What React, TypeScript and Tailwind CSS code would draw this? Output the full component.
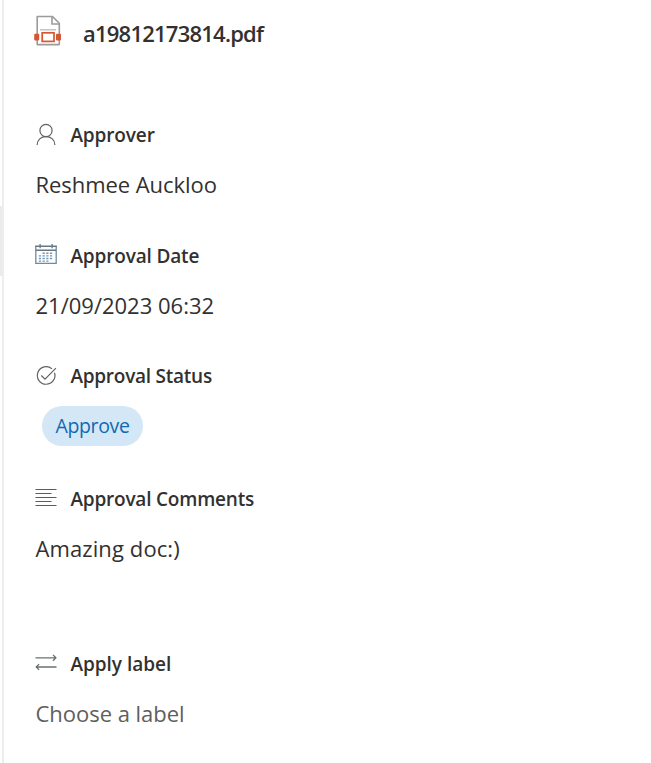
import type { ReactNode } from "react";

function PdfIcon() {
  return (
    <svg width="28" height="32" viewBox="0 0 28 32" fill="none" className="shrink-0">
      <path d="M3.2 1.5H18.5L25.3 8.3V29.6H3.2Z" fill="#fff" stroke="#9b9b9b" strokeWidth="1.6" strokeLinejoin="round" />
      <path d="M18 1.8V9H25" stroke="#9b9b9b" strokeWidth="1.6" />
      <path d="M6 14.8H22" stroke="#b5b5b5" strokeWidth="1.2" />
      <rect x="6" y="16.3" width="16" height="11.7" fill="#fff" />
      <rect x="8.2" y="17.8" width="11.8" height="8.6" stroke="#d65532" strokeWidth="1.7" />
      <rect x="0.2" y="18.8" width="5" height="6.8" rx="1" fill="#d65532" />
      <rect x="22" y="18.8" width="5" height="6.8" rx="1" fill="#d65532" />
    </svg>
  );
}

function PersonIcon() {
  return (
    <svg width="22" height="24" viewBox="0 0 22 24" fill="none" stroke="#5f6265" strokeWidth="1.2" className="shrink-0">
      <circle cx="11" cy="8.5" r="6.1" />
      <path d="M2.1 23C2.1 18 6 14.6 11 14.6S19.9 18 19.9 23" />
    </svg>
  );
}

function CalendarIcon() {
  return (
    <svg width="22" height="24" viewBox="0 0 22 24" fill="none" stroke="#667783" className="shrink-0">
      <path d="M0.8 3V20.3H21.2V3" stroke="#6d8ba3" strokeWidth="1.3" />
      <path d="M0.2 3.2H21.8M0.8 7.3H21.2" strokeWidth="1.5" />
      <path d="M5.1 1V5.3M17.1 1V5.3" strokeWidth="1.3" />
      <path
        d="M7.5 10.3H17.3M3.8 12.9H17.3M3.8 15.5H17.3M3.8 18.1H13.6"
        strokeWidth="1.4"
        strokeDasharray="2.3 1.4"
        stroke="#7196b6"
      />
    </svg>
  );
}

function CheckIcon() {
  return (
    <svg width="22" height="24" viewBox="0 0 22 24" fill="none" stroke="#5f6265" strokeWidth="1.2" className="shrink-0">
      <path d="M17 5.9A8.8 8.8 0 1 0 19.5 9.7" />
      <path d="M6.3 12.5L10 16.2L20.9 5.2" />
    </svg>
  );
}

function LinesIcon() {
  return (
    <svg width="22" height="24" viewBox="0 0 22 24" fill="none" stroke="#5c5c5c" className="shrink-0">
      <path d="M0.5 3.5H21.5M0.5 7.5H16.5M0.5 11.5H21.5M0.5 15.5H16.5M0.5 19.5H21.5" />
    </svg>
  );
}

function SwapIcon() {
  return (
    <svg width="22" height="24" viewBox="0 0 22 24" fill="none" stroke="#6a7070" strokeWidth="1.3" className="shrink-0">
      <path d="M0.5 6.8H21M18 3.9L20.9 6.8L18 9.7" />
      <path d="M21.5 16H1.2M4.1 13.1L1.2 16L4.1 18.9" />
    </svg>
  );
}

function Label({ icon, className, children }: { icon: ReactNode; className: string; children: string }) {
  return (
    <div className="flex h-[30px] items-center gap-[13px]">
      <div className="pb-[2px]">{icon}</div>
      <span className={"pl-[0.4px] text-[19px] font-semibold leading-[30px] whitespace-nowrap " + className}>
        {children}
      </span>
    </div>
  );
}

function Value({ className, children }: { className?: string; children: string }) {
  return (
    <div className={"mt-[19px] h-[30px] pl-[0.5px] text-[22px] leading-[30px] whitespace-nowrap " + (className ?? "")}>
      {children}
    </div>
  );
}

export default function App() {
  return (
    <div className="flex h-[763px] w-[651px] overflow-hidden bg-white font-['Open_Sans','Noto_Sans',sans-serif] text-[#323130]">
      <div className="w-1 shrink-0 border-r-2 border-[#eeeeee]">
        <div className="mt-[206px] h-[70px] bg-[#edebe9]" />
      </div>
      <main className="flex-1 pl-[31px]">
        <header className="-ml-px flex h-[120px] items-start pt-[15px]">
          <PdfIcon />
          <h1 className="mt-[3px] ml-[21px] text-[22px] font-semibold leading-[30px] tracking-[-0.77px]">
            a19812173814.pdf
          </h1>
        </header>
        <section className="h-[121px]">
          <Label icon={<PersonIcon />} className="tracking-[-0.12px]">Approver</Label>
          <Value className="tracking-[-0.06px]">Reshmee Auckloo</Value>
        </section>
        <section className="h-[120px]">
          <Label icon={<CalendarIcon />} className="tracking-[-0.15px]">Approval Date</Label>
          <Value>21/09/2023 06:32</Value>
        </section>
        <section className="h-[123px]">
          <Label icon={<CheckIcon />} className="tracking-[-0.25px]">Approval Status</Label>
          <div className="mt-[15px] ml-[7px] flex h-10 w-[101px] items-center justify-center rounded-full bg-[#d4e7f6] text-[19.5px] tracking-[-0.35px] text-[#1068b4]">
            <span>Approve</span>
          </div>
        </section>
        <section className="h-[165px]">
          <Label icon={<LinesIcon />} className="tracking-[-0.2px]">Approval Comments</Label>
          <Value className="tracking-[0.1px]">Amazing doc:)</Value>
        </section>
        <section>
          <Label icon={<SwapIcon />} className="tracking-[-0.02px]">Apply label</Label>
          <Value className="tracking-[-0.03px] text-[#605e5c]">Choose a label</Value>
        </section>
      </main>
    </div>
  );
}
